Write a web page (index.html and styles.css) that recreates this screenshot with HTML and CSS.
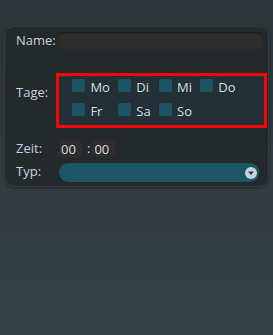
FILE: index.html
```html
<!DOCTYPE html>
<html lang="de">
<head>
  <meta charset="UTF-8">
  <meta name="viewport" content="width=device-width, initial-scale=1.0">
  <title>Timer</title>
  <link rel="stylesheet" href="styles.css">
</head>
<body>

  <div class="panel">
    <div class="row row-name">
      <label class="label" for="name">Name:</label>
      <input type="text" id="name" class="name-input">
    </div>

    <div class="row row-days">
      <span class="label">Tage:</span>
      <div class="days">
        <label class="day"><input type="checkbox"> Mo</label>
        <label class="day"><input type="checkbox"> Di</label>
        <label class="day"><input type="checkbox"> Mi</label>
        <label class="day"><input type="checkbox"> Do</label>
        <label class="day"><input type="checkbox"> Fr</label>
        <label class="day"><input type="checkbox"> Sa</label>
        <label class="day"><input type="checkbox"> So</label>
      </div>
    </div>

    <div class="row row-time">
      <span class="label">Zeit:</span>
      <input type="text" class="time-input" value="00">
      <span class="colon">:</span>
      <input type="text" class="time-input" value="00">
    </div>

    <div class="row row-type">
      <span class="label">Typ:</span>
      <div class="select">
        <span class="select-arrow">
          <svg width="12" height="12" viewBox="0 0 12 12">
            <circle cx="6" cy="6" r="6" fill="#c4d4da"/>
            <path d="M3 4.5 L9 4.5 L6 8 Z" fill="#1f3a44"/>
          </svg>
        </span>
      </div>
    </div>
  </div>

</body>
</html>
```

FILE: styles.css
```css
html, body {
  height: 100%;
}
body {
  margin: 0;
  font-family: "Open Sans", "Noto Sans", sans-serif;
  font-size: 13px;
  line-height: 17px;
  color: #c6d2dc;
  background: linear-gradient(#2c3539, #344246);
}
.panel {
  width: 252px;
  margin: 26px 0 0 4px;
  padding: 5px 0 4px 11px;
  border: 1px solid #353b3f;
  border-radius: 10px;
  background-color: #24292c;
  box-shadow: 0 1px 3px rgba(0, 0, 0, 0.35);
}
.row {
  display: flex;
  align-items: center;
}
.label {
  width: 42px;
  flex-shrink: 0;
}
.name-input {
  width: 205px;
  height: 17px;
  padding: 0;
  border: none;
  border-radius: 4px;
  background-color: #2d2d2d;
  box-shadow: inset 0 1px 2px rgba(0, 0, 0, 0.4);
}
.row-days {
  align-items: flex-start;
  margin-top: 27px;
}
.row-days .label {
  margin-top: 8px;
}
.days {
  margin-left: 1px;
  width: 179px;
  padding: 0 13px 3px;
  display: grid;
  grid-template-columns: repeat(4, auto);
  justify-content: start;
  column-gap: 8px;
  row-gap: 2px;
  line-height: 22px;
  background-color: #233035;
  outline: 3px solid #ff0000;
  color: #d6dee4;
}
.day input {
  appearance: none;
  -webkit-appearance: none;
  width: 13px;
  height: 13px;
  margin: 0 2px 0 0;
  vertical-align: baseline;
  border-radius: 2px;
  background-color: #1c5466;
}
.row-time {
  margin-top: 15px;
}
.time-input {
  width: 24px;
  height: 17px;
  padding: 0 0 0 3px;
  box-sizing: border-box;
  border: none;
  border-radius: 3px;
  background-color: #2d2d2d;
  color: #dcdcdc;
  font-family: inherit;
  font-size: 13px;
}
.colon {
  margin: 0 1px 0 5px;
  color: #dcdcdc;
}
.row-type {
  margin-top: 6px;
}
.row-type .label {
  margin-top: -3px;
}
.select {
  margin-left: 1px;
  width: 200px;
  height: 19px;
  border-radius: 9px;
  background-color: #1d5666;
  display: flex;
  align-items: center;
  justify-content: flex-end;
}
.select-arrow {
  display: flex;
  margin-right: 2px;
}
```
